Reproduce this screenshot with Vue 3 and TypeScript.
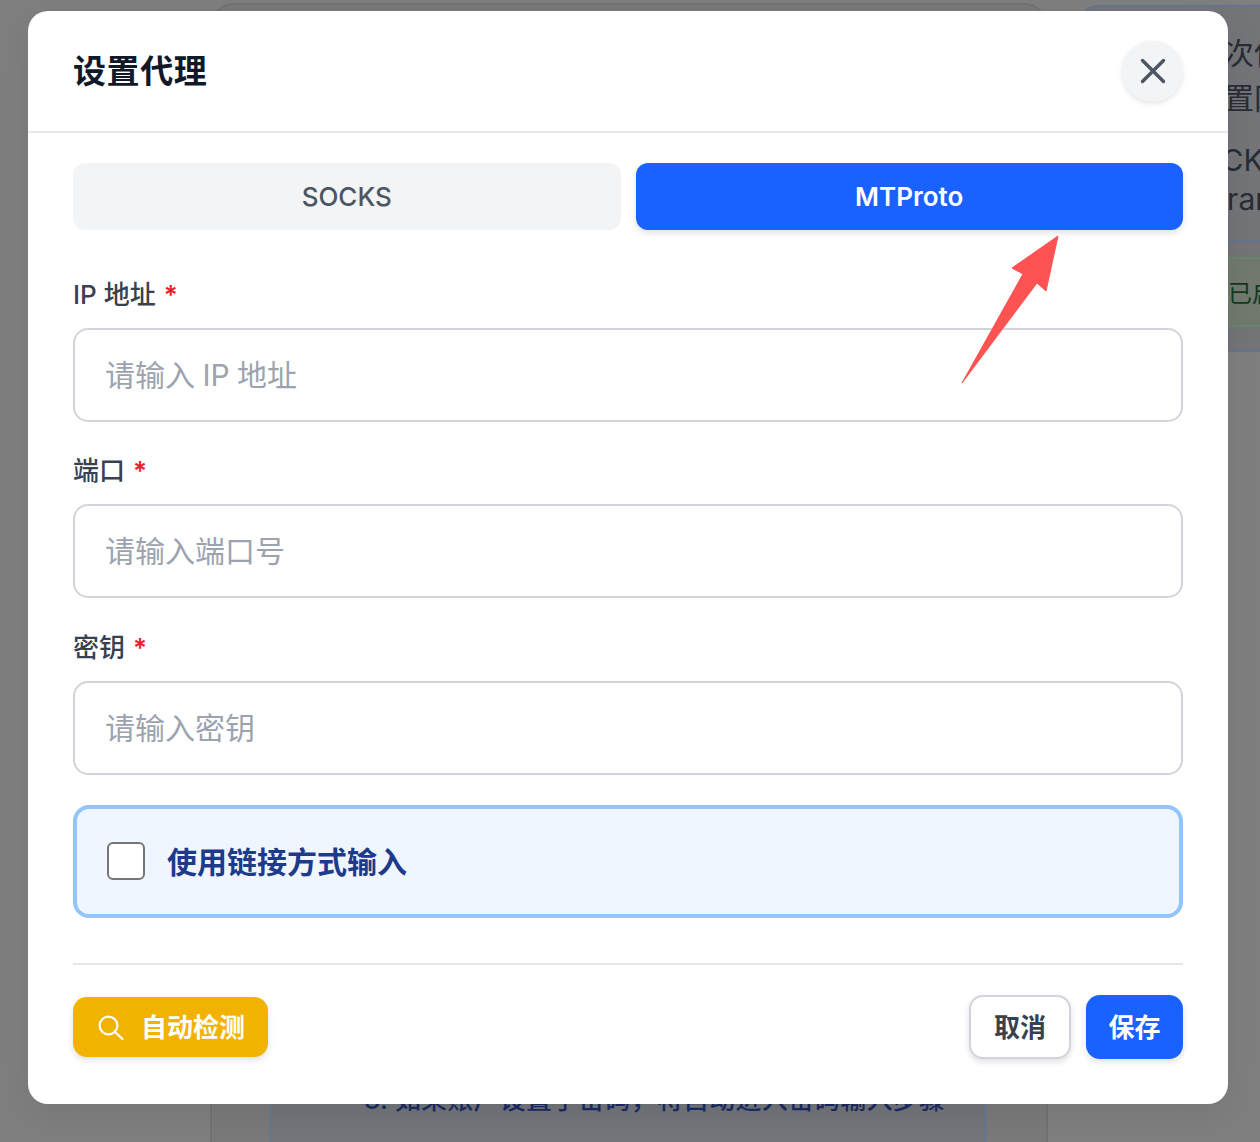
<script setup lang="ts">
interface Field {
  label: string;
  placeholder: string;
}

const fields: Field[] = [
  { label: "IP 地址", placeholder: "请输入 IP 地址" },
  { label: "端口", placeholder: "请输入端口号" },
  { label: "密钥", placeholder: "请输入密钥" },
];
</script>

<template>
  <div class="page">
    <section class="bg-center">
      <div class="bg-note">3. 如果账户设置了密码，将自动进入密码输入步骤</div>
    </section>
    <section class="bg-right">
      <div class="bg-head">
        <p class="bg-line l1">如您首次使用</p>
        <p class="bg-line l2">请先配置网络</p>
        <p class="bg-line l3">请选择 SOCKS</p>
        <p class="bg-line l4">或者 Transport</p>
      </div>
      <div class="bg-ok">当前已启用</div>
    </section>

    <div class="overlay">
      <div class="modal">
        <header class="modal-head">
          <h2 class="title">设置代理</h2>
          <button class="close" aria-label="关闭">
            <svg width="26" height="26" viewBox="0 0 26 26" fill="none">
              <path d="M2.5 2.5 L23.5 23.5 M23.5 2.5 L2.5 23.5" stroke="#4b5563" stroke-width="3.4" stroke-linecap="round" />
            </svg>
          </button>
        </header>

        <div class="modal-body">
          <div class="tabs">
            <button class="tab">SOCKS</button>
            <button class="tab active">MTProto</button>
          </div>

          <div v-for="f in fields" :key="f.label" class="field">
            <label class="label">{{ f.label }}<span class="req">*</span></label>
            <input class="input" type="text" :placeholder="f.placeholder" />
          </div>

          <label class="link-box">
            <input class="check" type="checkbox" />
            <span class="link-text">使用链接方式输入</span>
          </label>

          <footer class="actions">
            <button class="btn detect">
              <svg width="26" height="26" viewBox="0 0 26 26" fill="none">
                <circle cx="10.5" cy="11.5" r="8.9" stroke="#fff" stroke-width="2.2" />
                <path d="M17 18 L24.5 25" stroke="#fff" stroke-width="2.2" stroke-linecap="round" />
              </svg>
              <span>自动检测</span>
            </button>
            <div class="right-actions">
              <button class="btn cancel">取消</button>
              <button class="btn save">保存</button>
            </div>
          </footer>
        </div>

        <svg class="arrow" width="100" height="152" viewBox="0 0 100 152">
          <path d="M97 1 L51 33 L62 39 L1 148 L76 48 L85 56 Z" fill="#ff5252" stroke="#ff5252" stroke-width="1" stroke-linejoin="round" />
        </svg>
      </div>
    </div>
  </div>
</template>

<style>
html,
body {
  margin: 0;
  background: #7f7f7f;
}
</style>

<style scoped>
.page {
  position: relative;
  width: 1260px;
  height: 1142px;
  overflow: hidden;
  display: flex;
  align-items: flex-start;
  gap: 30px;
  padding: 3px 0 0 210px;
  box-sizing: border-box;
  background: #7f7f7f;
  font-family: Inter, "Noto Sans CJK SC", sans-serif;
}

.bg-center {
  flex: none;
  box-sizing: border-box;
  width: 838px;
  height: 1400px;
  padding: 600px 60px 0 58px;
  background: #7a7a7a;
  border: 2px solid #727272;
  border-radius: 24px;
}

.bg-note {
  box-sizing: border-box;
  height: 700px;
  padding: 475px 0 0 92px;
  background: linear-gradient(180deg, #5e6266, #73767a 78%);
  border: 2px solid #67788f;
  border-radius: 14px;
  color: #1b2a63;
  font-size: 26px;
  font-weight: 500;
  letter-spacing: 0.2px;
  line-height: 36px;
  white-space: nowrap;
}

.bg-right {
  flex: none;
  box-sizing: border-box;
  width: 400px;
  height: 347px;
  margin-top: 2px;
  padding: 24px 30px 0;
  background: #737579;
  border: 2px solid #65758f;
  border-radius: 20px;
  overflow: hidden;
}

.bg-head {
  box-sizing: border-box;
  height: 211px;
  border-bottom: 2px solid #65758f;
  margin: 0 -30px;
  padding: 0 30px;
}

.bg-line {
  margin: 0;
  color: #2a2c35;
  font-size: 30px;
  line-height: 45px;
  white-space: nowrap;
}

.l1,
.l2 {
  margin-left: 24px;
}

.l3 {
  margin-top: 20px;
  margin-left: -29px;
  line-height: 39px;
}

.l4 {
  margin-left: 31px;
  line-height: 38px;
}

.bg-ok {
  box-sizing: border-box;
  height: 70px;
  margin: 15px -30px 0;
  padding-left: 100px;
  background: #72796f;
  border-top: 2px solid #66856f;
  border-bottom: 2px solid #66856f;
  color: #123a1d;
  font-size: 24px;
  line-height: 70px;
  white-space: nowrap;
}

.overlay {
  position: absolute;
  inset: 0;
  padding: 11px 0 0 28px;
}

.modal {
  position: relative;
  width: 1200px;
  height: 1093px;
  background: #fff;
  border-radius: 20px;
  box-shadow: 0 10px 40px rgba(0, 0, 0, 0.08);
}

.modal-head {
  box-sizing: border-box;
  height: 122px;
  display: flex;
  align-items: center;
  justify-content: space-between;
  padding: 0 45px 0 45px;
  border-bottom: 2px solid #e5e7eb;
}

.title {
  margin: 0;
  font-size: 33px;
  line-height: 44px;
  font-weight: 700;
  letter-spacing: 0.6px;
  color: #111827;
}

.close {
  width: 61px;
  height: 61px;
  padding: 0;
  border: none;
  border-radius: 50%;
  background: #f3f4f6;
  box-shadow: 0 2px 5px rgba(0, 0, 0, 0.1);
  display: flex;
  align-items: center;
  justify-content: center;
}

.modal-body {
  padding: 30px 45px 0;
}

.tabs {
  display: grid;
  grid-template-columns: 1fr 1fr;
  gap: 15px;
}

.tab {
  height: 67px;
  border: none;
  border-radius: 12px;
  background: #f3f4f6;
  color: #4b5563;
  font-family: inherit;
  font-size: 26px;
  font-weight: 500;
}

.tab.active {
  background: #1a62ff;
  color: #fff;
  font-weight: 600;
  box-shadow: 0 3px 6px rgba(0, 0, 0, 0.12);
}

.field {
  margin-top: 44px;
}

.field + .field {
  margin-top: 28.4px;
}

.label {
  display: block;
  height: 54px;
  font-size: 26px;
  line-height: 41px;
  font-weight: 500;
  color: #374151;
}

.req {
  margin-left: 8px;
  color: #ef1c2c;
  font-weight: 600;
}

.input {
  display: block;
  box-sizing: border-box;
  width: 100%;
  height: 94px;
  padding: 0 30px;
  border: 2px solid #d1d5db;
  border-radius: 15px;
  background: #fff;
  outline: none;
  font-family: inherit;
  font-size: 30px;
  word-spacing: -1px;
}

.input::placeholder {
  color: #9ca3af;
  opacity: 1;
}

.link-box {
  box-sizing: border-box;
  height: 113px;
  margin-top: 30px;
  padding: 0 30px;
  display: flex;
  align-items: center;
  gap: 22px;
  background: #eff6ff;
  border: 4px solid #93c5fd;
  border-radius: 16px;
}

.check {
  appearance: none;
  flex: none;
  width: 38px;
  height: 38px;
  margin: 0;
  background: #fff;
  border: 2px solid #767676;
  border-radius: 6px;
}

.link-text {
  padding-top: 1px;
  font-size: 30px;
  line-height: 40px;
  font-weight: 700;
  color: #1e3a8a;
}

.actions {
  margin-top: 45px;
  padding-top: 30px;
  border-top: 2px solid #e5e7eb;
  display: flex;
  align-items: center;
  justify-content: space-between;
}

.right-actions {
  display: flex;
  gap: 15px;
}

.btn {
  box-sizing: border-box;
  border: none;
  padding: 3px 0 0;
  font-family: inherit;
  font-size: 26px;
  line-height: 36px;
  font-weight: 600;
  display: flex;
  align-items: center;
  justify-content: center;
  box-shadow: 0 3px 6px rgba(0, 0, 0, 0.12);
}

.detect {
  width: 195px;
  height: 60px;
  gap: 17px;
  padding-left: 2px;
  border-radius: 14px;
  background: #f2b200;
  color: #fff;
}

.detect svg {
  margin-top: -3px;
}

.cancel {
  width: 102px;
  height: 64px;
  border: 2px solid #d1d5db;
  border-radius: 14px;
  background: #fff;
  color: #374151;
}

.save {
  width: 97px;
  height: 64px;
  border-radius: 14px;
  background: #1a62ff;
  color: #fff;
}

.arrow {
  position: absolute;
  left: 933px;
  top: 224px;
}
</style>
